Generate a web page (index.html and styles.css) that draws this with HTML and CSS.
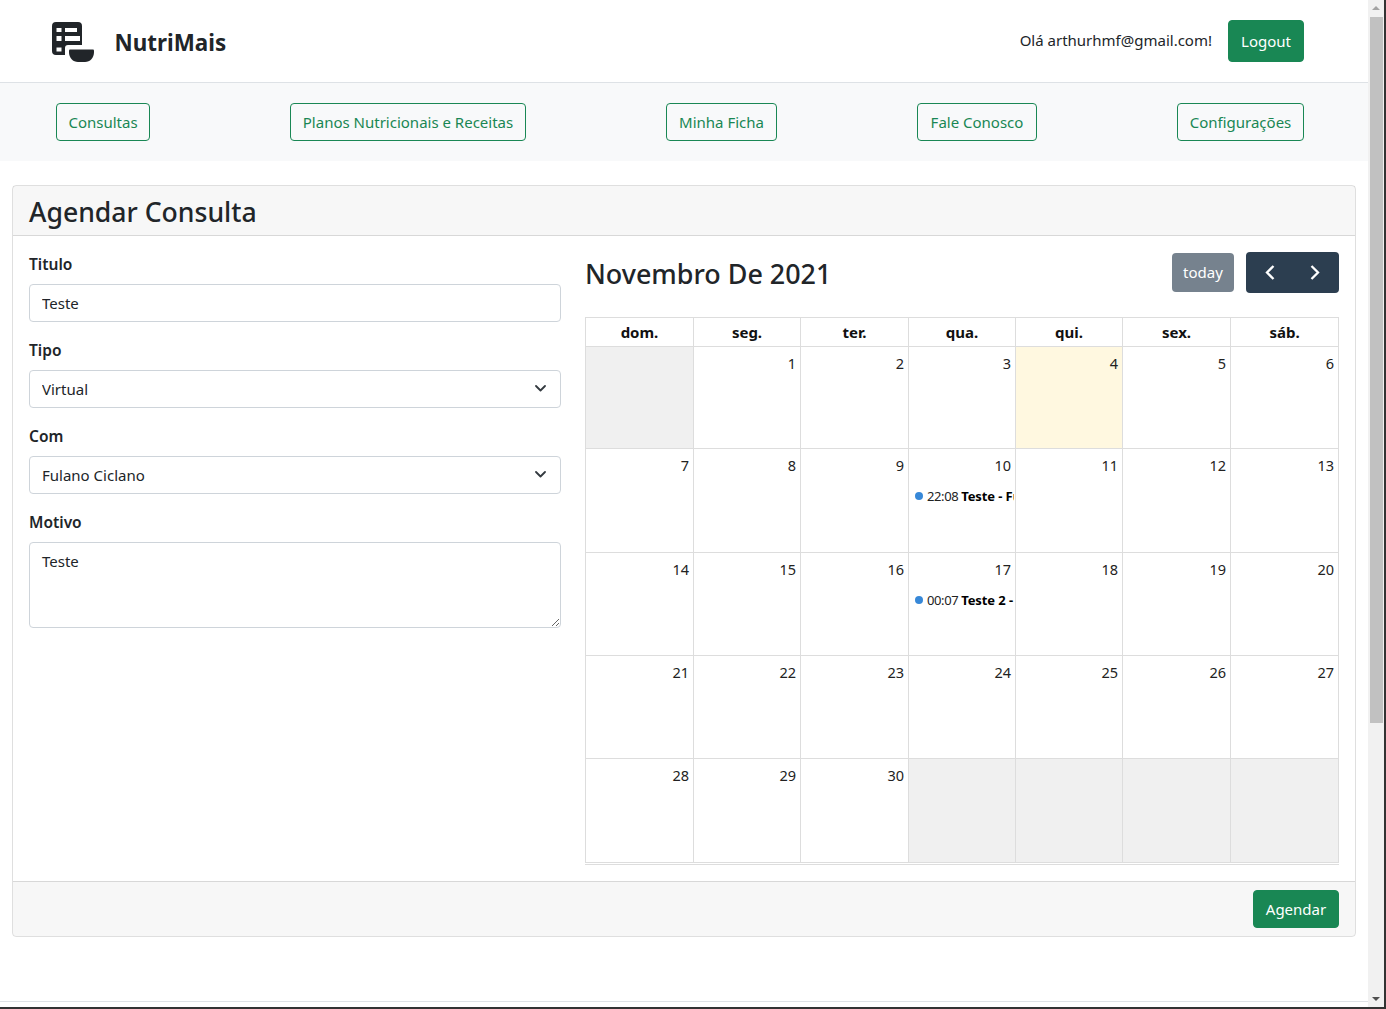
FILE: index.html
```html
<!DOCTYPE html>
<html lang="pt-BR">
<head>
    <meta charset="UTF-8">
    <meta name="viewport" content="width=device-width, initial-scale=1.0">
    <title>NutriMais</title>
    <link rel="stylesheet" href="styles.css">
</head>
<body>
<div class="window">
    <div class="page">
        <header class="topbar">
            <a class="brand">
                <svg class="brand-icon" width="42" height="40" viewBox="0 0 42 40">
                    <path fill="#212529" fill-rule="evenodd" d="M4 0H26a4 4 0 0 1 4 4V23H16a3 3 0 0 0-3 3V33H4a4 4 0 0 1-4-4V4a4 4 0 0 1 4-4ZM4.5 6V10H9.5V6ZM13 6V10H25V6ZM4.5 14V19H9.5V14ZM13 14V19H28V14ZM4.5 25.5V29.5H9.5V25.5Z"/>
                    <path fill="#212529" d="M18 27.5H41a1 1 0 0 1 1 1V30C42 36 38 40 33 40H26C21 40 17 36 17 30V28.5a1 1 0 0 1 1-1Z"/>
                </svg>
                <span class="brand-name">NutriMais</span>
            </a>
            <div class="user-box">
                <span class="user-hello">Olá arthurhmf@gmail.com!</span>
                <button class="btn btn-green btn-logout">Logout</button>
            </div>
        </header>

        <nav class="menu">
            <a class="btn btn-line">Consultas</a>
            <a class="btn btn-line">Planos Nutricionais e Receitas</a>
            <a class="btn btn-line">Minha Ficha</a>
            <a class="btn btn-line">Fale Conosco</a>
            <a class="btn btn-line">Configurações</a>
        </nav>

        <main class="content">
            <section class="card">
                <div class="card-header">
                    <h3>Agendar Consulta</h3>
                </div>
                <div class="card-body">
                    <form class="form-col">
                        <label for="titulo">Titulo</label>
                        <input type="text" id="titulo" class="field" value="Teste">

                        <label for="tipo">Tipo</label>
                        <div class="select-wrap">
                            <select id="tipo" class="field">
                                <option>Virtual</option>
                            </select>
                            <svg class="select-arrow" width="11" height="7" viewBox="0 0 11 7"><path d="M1 1l4.5 4.5L10 1" fill="none" stroke="#343a40" stroke-width="1.8" stroke-linecap="round" stroke-linejoin="round"/></svg>
                        </div>

                        <label for="com">Com</label>
                        <div class="select-wrap">
                            <select id="com" class="field">
                                <option>Fulano Ciclano</option>
                            </select>
                            <svg class="select-arrow" width="11" height="7" viewBox="0 0 11 7"><path d="M1 1l4.5 4.5L10 1" fill="none" stroke="#343a40" stroke-width="1.8" stroke-linecap="round" stroke-linejoin="round"/></svg>
                        </div>

                        <label for="motivo">Motivo</label>
                        <textarea id="motivo" class="field field-area">Teste</textarea>
                    </form>

                    <div class="calendar">
                        <div class="cal-toolbar">
                            <h2>Novembro De 2021</h2>
                            <div class="cal-actions">
                                <button class="cal-today">today</button>
                                <div class="cal-nav">
                                    <button aria-label="prev"><svg width="12" height="15" viewBox="0 0 12 15"><path d="M9.5 1L3 7.5 9.5 14" fill="none" stroke="#fff" stroke-width="2.3"/></svg></button>
                                    <button aria-label="next"><svg width="12" height="15" viewBox="0 0 12 15"><path d="M2.5 1L9 7.5 2.5 14" fill="none" stroke="#fff" stroke-width="2.3"/></svg></button>
                                </div>
                            </div>
                        </div>
                        <div class="cal-wrap">
                            <table class="cal-grid">
                                <thead>
                                    <tr><th>dom.</th><th>seg.</th><th>ter.</th><th>qua.</th><th>qui.</th><th>sex.</th><th>sáb.</th></tr>
                                </thead>
                                <tbody>
                                    <tr class="week-1">
                                        <td class="off"></td><td>1</td><td>2</td><td>3</td><td class="today">4</td><td>5</td><td>6</td>
                                    </tr>
                                    <tr class="week-2">
                                        <td>7</td><td>8</td><td>9</td>
                                        <td>10<div class="event"><i class="dot"></i>22:08 <b>Teste - Fulano Ciclano</b></div></td>
                                        <td>11</td><td>12</td><td>13</td>
                                    </tr>
                                    <tr class="week-3">
                                        <td>14</td><td>15</td><td>16</td>
                                        <td>17<div class="event"><i class="dot"></i>00:07 <b>Teste 2 - Fulano Ciclano</b></div></td>
                                        <td>18</td><td>19</td><td>20</td>
                                    </tr>
                                    <tr class="week-4">
                                        <td>21</td><td>22</td><td>23</td><td>24</td><td>25</td><td>26</td><td>27</td>
                                    </tr>
                                    <tr class="week-5">
                                        <td>28</td><td>29</td><td>30</td><td class="off"></td><td class="off"></td><td class="off"></td><td class="off"></td>
                                    </tr>
                                </tbody>
                            </table>
                        </div>
                    </div>
                </div>
                <div class="card-footer">
                    <button class="btn btn-green">Agendar</button>
                </div>
            </section>
        </main>

        <footer class="page-foot"></footer>
    </div>

    <div class="scrollbar">
        <span class="arrow-up"></span>
        <div class="thumb-lane"><div class="thumb"></div></div>
        <span class="arrow-down"></span>
    </div>
</div>
</body>
</html>
```

FILE: styles.css
```css
* {
    box-sizing: border-box;
}
html, body {
    margin: 0;
    height: 100%;
    overflow: hidden;
}
body {
    font-family: "Noto Sans", "Open Sans", sans-serif;
    font-size: 15px;
    line-height: 24px;
    color: #212529;
    background: #fff;
}
.window {
    display: flex;
    height: 1009px;
    border-right: 2px solid #333;
    border-bottom: 2px solid #333;
}
.page {
    width: 1368px;
    flex: none;
    display: flex;
    flex-direction: column;
}

/* topo */
.topbar {
    height: 83px;
    flex: none;
    display: flex;
    align-items: center;
    justify-content: space-between;
    padding: 0 64px 0 52px;
    border-bottom: 1px solid #dee2e6;
}
.brand {
    display: flex;
    align-items: center;
    gap: 21px;
    margin-top: 2px;
}
.brand-name {
    margin-top: 1px;
    margin-left: -.5px;
    font-size: 22.4px;
    font-weight: 700;
}
.user-box {
    display: flex;
    align-items: center;
    gap: 16px;
}
.user-hello {
    margin-top: -3px;
}
.btn {
    display: inline-block;
    height: 38px;
    padding: 6px 0;
    font: inherit;
    border: 1px solid transparent;
    border-radius: 4px;
    text-align: center;
}
.btn-green {
    width: 86px;
    background: #198754;
    border-color: #198754;
    color: #fff;
}
.btn-logout {
    width: 76px;
    height: 42px;
    margin-top: -1px;
}
.btn-line {
    color: #198754;
    border-color: #198754;
}
.btn-line:nth-child(1) { width: 94px; }
.btn-line:nth-child(2) { width: 236px; }
.btn-line:nth-child(3) { width: 111px; }
.btn-line:nth-child(4) { width: 120px; }
.btn-line:nth-child(5) { width: 127px; }

.menu {
    height: 78px;
    flex: none;
    display: flex;
    align-items: center;
    justify-content: space-between;
    padding: 0 64px 0 56px;
    background: #f8f9fa;
}

/* card */
.content {
    flex: 1;
    padding: 24px 12px 0;
}
.card {
    height: 752px;
    display: flex;
    flex-direction: column;
    border: 1px solid rgba(0,0,0,.125);
    border-radius: 4px;
}
.card-header {
    height: 50px;
    flex: none;
    padding: 9px 16px 7px;
    background: rgba(0,0,0,.03);
    border-bottom: 1px solid rgba(0,0,0,.125);
}
.card-header h3 {
    margin: 0;
    font-size: 26.6px;
    line-height: 34px;
    font-weight: 500;
}
.card-body {
    flex: 1;
    display: flex;
    gap: 24px;
    padding: 16px;
}
.card-footer {
    height: 55px;
    flex: none;
    display: flex;
    justify-content: flex-end;
    align-items: center;
    padding: 0 16px;
    background: rgba(0,0,0,.03);
    border-top: 1px solid rgba(0,0,0,.125);
    border-radius: 0 0 3px 3px;
}

/* formulario */
.form-col {
    width: 532px;
    flex: none;
}
.form-col label {
    display: block;
    margin-bottom: 8px;
    font-size: 15.5px;
    font-weight: 600;
}
.field {
    display: block;
    width: 100%;
    height: 38px;
    margin-bottom: 16px;
    padding: 6px 12px;
    font: inherit;
    color: #212529;
    background: #fff;
    border: 1px solid #ced4da;
    border-radius: 4px;
    appearance: none;
    outline: none;
}
.field-area {
    height: 86px;
    margin-bottom: 0;
    resize: vertical;
}
.select-wrap {
    position: relative;
}
.select-arrow {
    position: absolute;
    top: 15px;
    right: 15px;
    pointer-events: none;
}

/* calendario */
.calendar {
    flex: 1;
    min-width: 0;
}
.cal-toolbar {
    height: 41px;
    margin-bottom: 24px;
    display: flex;
    align-items: center;
    justify-content: space-between;
}
.cal-toolbar h2 {
    margin: 2px 0 0;
    font-size: 26.9px;
    line-height: 34px;
    font-weight: 500;
}
.cal-actions {
    display: flex;
    align-items: center;
    gap: 12px;
}
.cal-today {
    width: 62px;
    height: 39px;
    padding: 0 0 2px;
    font: inherit;
    color: #fff;
    background: #76828e;
    border: 0;
    border-radius: 4px;
}
.cal-nav {
    display: flex;
    width: 93px;
    height: 41px;
    padding: 0 1px;
    background: #2c3e50;
    border-radius: 4px;
}
.cal-nav button {
    flex: 1;
    display: flex;
    align-items: center;
    justify-content: center;
    padding: 0;
    background: none;
    border: 0;
}
.cal-wrap {
    padding-bottom: 1px;
    border-bottom: 1px solid #ddd;
}
.cal-grid {
    width: 754px;
    table-layout: fixed;
    border-collapse: collapse;
    border: 1px solid #ddd;
    font-size: 14.5px;
}
.cal-grid th {
    width: 108px;
    height: 29px;
    padding: 0;
    font-size: 15px;
    line-height: 28px;
    font-weight: 700;
    color: #111;
    border: 1px solid #ddd;
}
.cal-grid th:nth-child(2),
.cal-grid th:nth-child(4),
.cal-grid th:nth-child(5) {
    width: 107px;
}
.cal-grid td {
    padding: 4px;
    line-height: 24px;
    text-align: right;
    vertical-align: top;
    color: #222;
    border: 1px solid #ddd;
}
.week-1 td { height: 102px; }
.week-2 td { height: 104px; }
.week-3 td { height: 103px; }
.week-4 td { height: 103px; }
.week-5 td { height: 104px; }
.cal-grid td.off {
    background: #f0f0f0;
}
.cal-grid td.today {
    background: #fff8e0;
}
.event {
    margin: 9px -3px 0 0;
    overflow: hidden;
    white-space: nowrap;
    text-align: left;
    font-size: 13px;
    letter-spacing: -.4px;
    line-height: 20px;
}
.event b {
    color: #000;
    letter-spacing: -.1px;
}
.dot {
    display: inline-block;
    width: 8px;
    height: 8px;
    margin: 0 4px 1px 2px;
    border-radius: 50%;
    background: #3788d8;
}

.page-foot {
    height: 6px;
    flex: none;
    border-top: 1px solid #dee2e6;
}

/* barra de rolagem */
.scrollbar {
    width: 16px;
    flex: none;
    display: flex;
    flex-direction: column;
    align-items: center;
    background: #f1f1f1;
}
.arrow-up, .arrow-down {
    flex: none;
    width: 0;
    height: 0;
    margin: 6px 0;
    border-left: 4px solid transparent;
    border-right: 4px solid transparent;
}
.arrow-up {
    border-bottom: 4px solid #a3a3a3;
}
.arrow-down {
    border-top: 4px solid #505050;
}
.thumb-lane {
    flex: 1;
    width: 100%;
}
.thumb {
    height: 706px;
    margin: 1px 1px 0 2px;
    background: #c1c1c1;
}
```
